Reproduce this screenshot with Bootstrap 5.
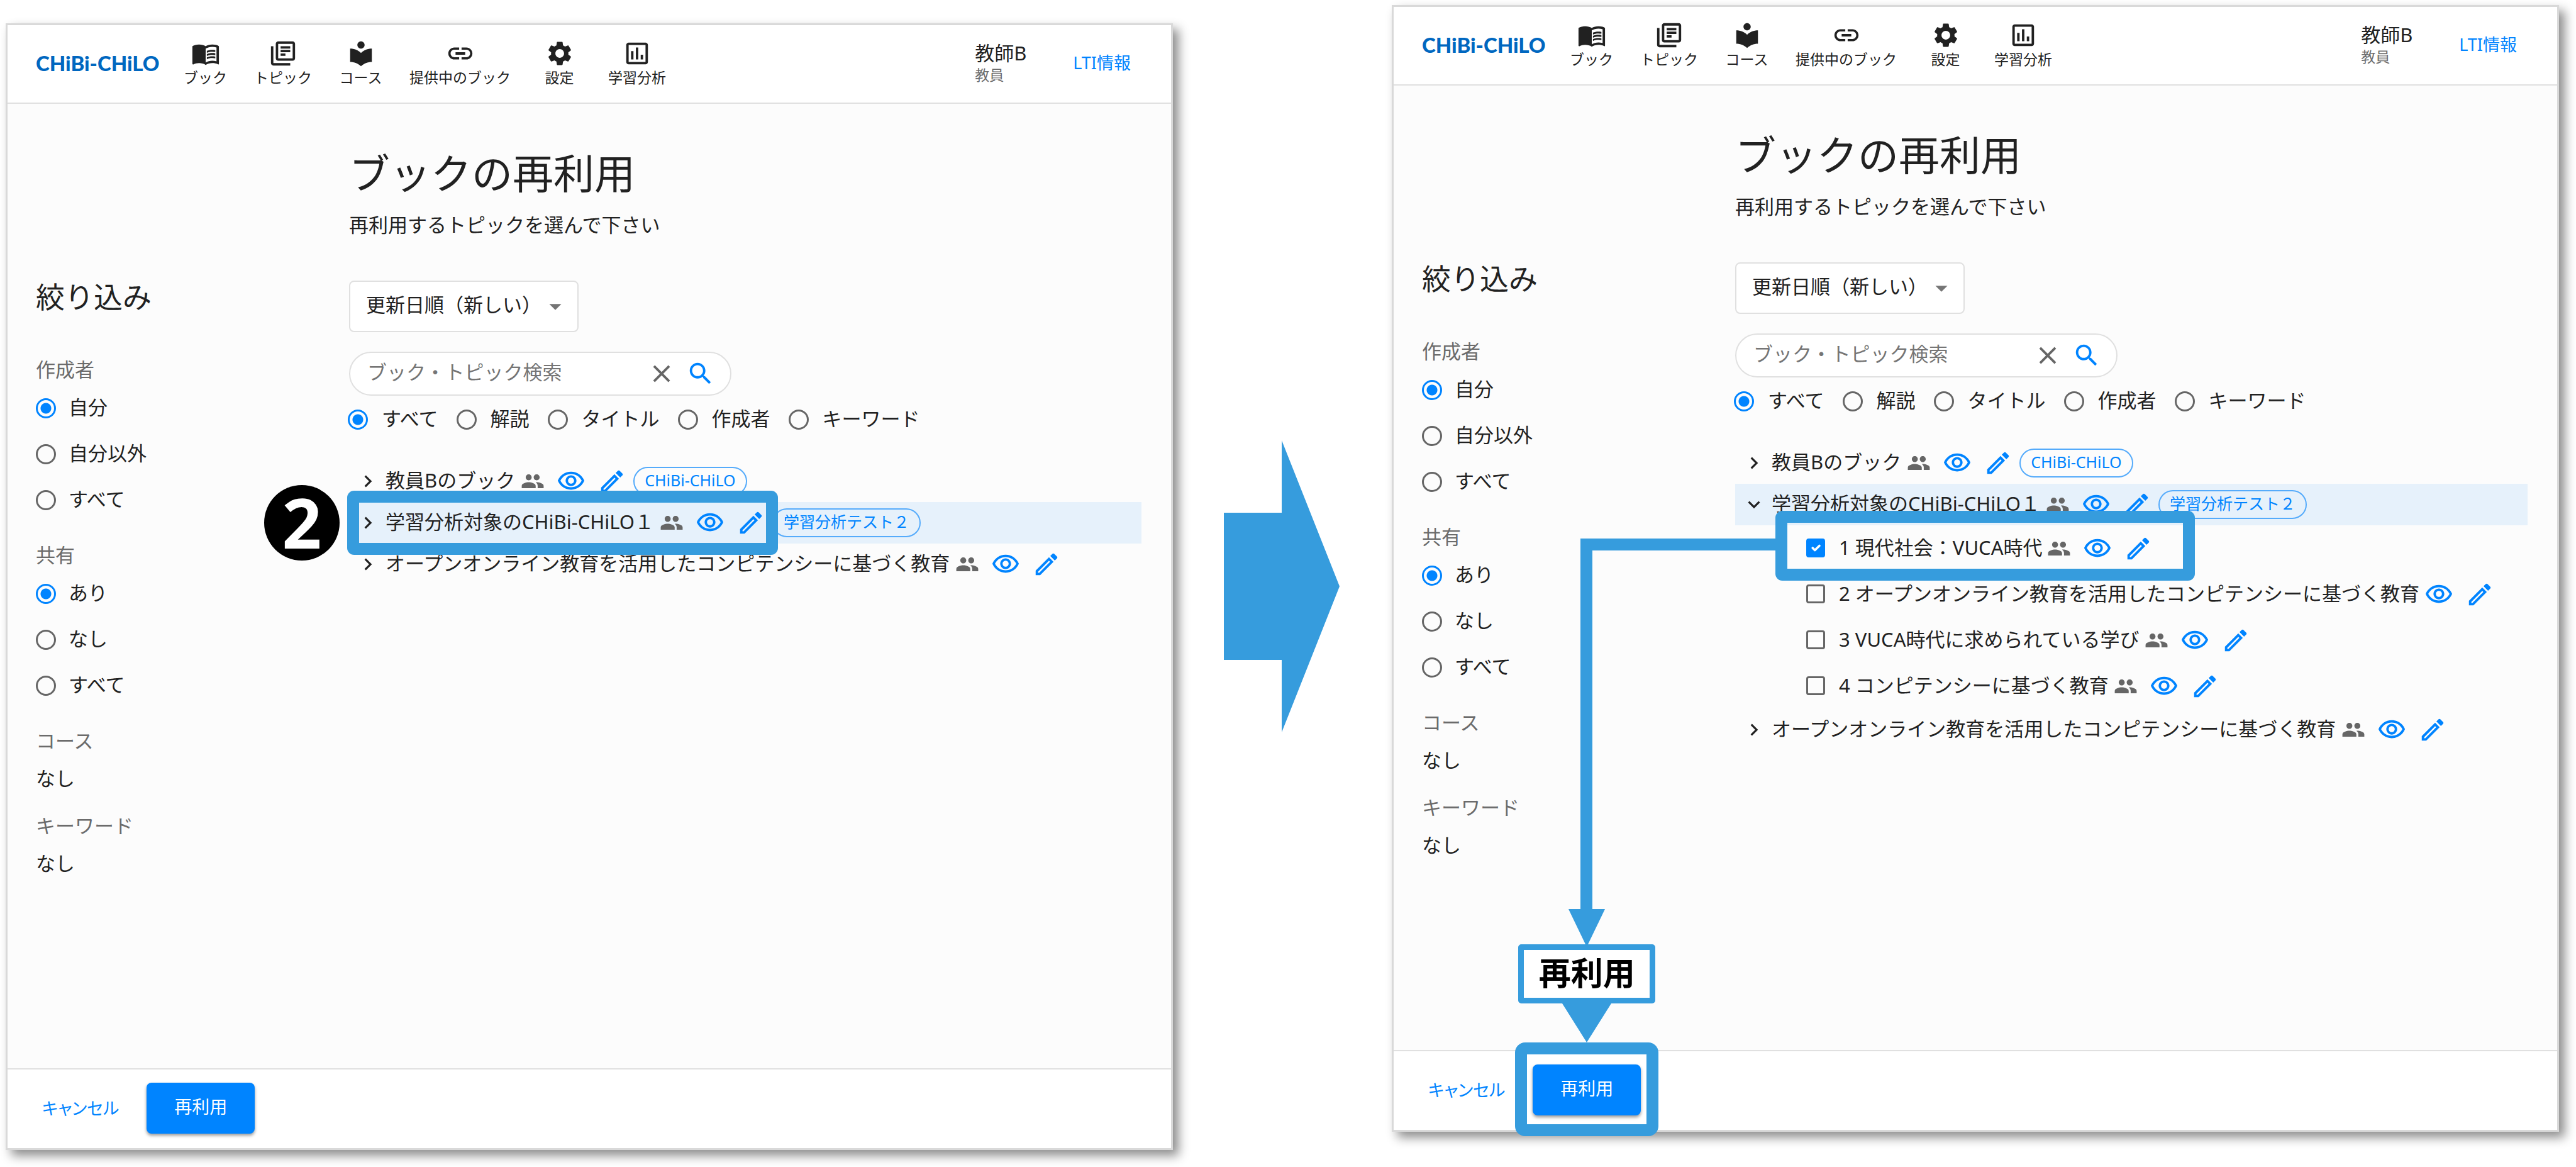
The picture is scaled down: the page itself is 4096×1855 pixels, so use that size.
<!DOCTYPE html>
<html lang="ja">
<head>
<meta charset="utf-8">
<meta name="viewport" content="width=device-width, initial-scale=1">
<title>ブックの再利用</title>
<link href="https://cdn.jsdelivr.net/npm/bootstrap@5.3.0/dist/css/bootstrap.min.css" rel="stylesheet">
<script src="https://cdn.jsdelivr.net/npm/bootstrap@5.3.0/dist/js/bootstrap.bundle.min.js"></script>
<style>
  :root { --accent: #0084ff; --callout: #369cdd; --ink: #212121; --muted: #6b6b6b; }
  body { font-family: "Noto Sans", "Noto Sans CJK JP", sans-serif; font-size: 31px; line-height: 46px; color: var(--ink); background: #fff; }
  svg { fill: currentColor; display: block; flex: none; }
  .i-lg { width: 46px; height: 46px; }
  .i-md { width: 38px; height: 38px; }
  .stage { padding: 0 27px 0 9px; }
  .slot { flex: 1 1 0; min-width: 0; }
  .slot-low { padding: 37px 0 27px; }
  .slot-high { padding: 8px 0 56px; }
  .between { width: 348px; padding-top: 700px; padding-left: 81px; }
  .screen { border: 3px solid #d9d9d9; background: #fcfcfc; box-shadow: 9px 9px 16px rgba(0,0,0,.45); }
  .topbar { height: 125px; background: #fff; border-bottom: 2px solid #e0e0e0; padding: 0 43px 4px 45px; }
  .brand { font: 900 33px/46px Lato, sans-serif; color: #0067c0; width: 213px; white-space: nowrap; }
  .menu-item { min-width: 113px; padding: 0 21px; font-size: 23px; line-height: 30px; color: var(--ink); text-decoration: none; }
  .who { width: 135px; line-height: 38px; }
  .who small { display: block; font-size: 23px; line-height: 32px; color: var(--muted); }
  .txt-link { color: var(--accent); font-size: 27px; text-decoration: none; border: 0; background: none; padding: 0 21px; font-feature-settings: "palt"; }
  .filters { width: 543px; padding: 276px 0 0 45px; }
  .filters h2 { font-size: 46px; line-height: 60px; margin: 0 0 62px; font-weight: 400; }
  .filters legend, .filters h3 { font-size: 31px; line-height: 48px; color: var(--muted); margin: 0; font-weight: 400; float: none; }
  .filters legend { margin-bottom: 2px; }
  .filters fieldset { margin-bottom: 26px; }
  .filters .pick, .filters p { height: 73px; line-height: 73px; margin: 0; }
  .filters p + h3 { margin-top: 14px; }
  .pick { display: flex; align-items: center; gap: 20px; padding-bottom: 4px; }
  .pick .form-check-input { width: 32px; height: 32px; margin: 3px 0 0; border: 3px solid #666; background-color: transparent; flex: none; box-shadow: none; }
  .pick .form-check-input[type=radio]:checked { border-color: var(--accent); background: radial-gradient(circle, var(--accent) 8px, transparent 9px); }
  .pick .form-check-input[type=checkbox] { width: 30px; height: 30px; border-radius: 4px; }
  .pick .form-check-input[type=checkbox]:checked { background-color: var(--accent); border-color: var(--accent); }
  .content { padding: 70px 47px 0 0; min-width: 0; }
  .content h1 { font-size: 65px; line-height: 80px; font-weight: 400; margin: 0 0 19px; }
  .content .intro { margin: 0 0 66px; }
  .sorter { width: 365px; height: 82px; margin-bottom: 31px; }
  .sorter select { height: 100%; padding: 0 0 6px 25px; font-size: 31px; line-height: 46px; color: var(--ink); background: #fff; border: 2px solid #e0e0e0; border-radius: 8px; }
  .sorter svg { position: absolute; right: 14px; top: 18px; color: #757575; pointer-events: none; }
  .finder { width: 608px; height: 70px; margin-bottom: 13px; padding: 0 24px 0 27px; background: #fff; border: 2px solid #e0e0e0; border-radius: 35px; }
  .finder input { border: 0; outline: 0; background: none; padding: 0 0 6px; color: var(--ink); min-width: 0; }
  .finder input::placeholder { color: #757575; opacity: 1; }
  .bare { border: 0; background: none; padding: 0; color: var(--accent); }
  .grayed { color: #666; }
  .scope { gap: 29px; margin: 0 0 40px -2px; }
  .scope .pick { gap: 22px; }
  .book { height: 66px; padding-left: 11px; }
  .book.on { background: #e6f1fb; }
  .ttl { margin: 0 9px; padding-bottom: 4px; white-space: nowrap; }
  .acts { gap: 19px; }
  .chip { margin-left: 11px; height: 46px; border: 2px solid #55abfb; border-radius: 23px; color: var(--accent); font-size: 25px; line-height: 38px; padding: 0 16px; white-space: nowrap; }
  .topic { height: 73px; padding-left: 113px; }
  .topic .pick { gap: 22px; }
  .actionbar { height: 127px; background: #fff; border-top: 2px solid #e0e0e0; padding: 0 0 2px 34px; gap: 23px; }
  .go { width: 172px; height: 81px; background: var(--accent); color: #fff; border: 0; border-radius: 8px; font-size: 28px; padding: 0 0 6px; box-shadow: 0 3px 5px rgba(0,0,0,.4); }
  .ring { position: absolute; border: 19px solid var(--callout); border-radius: 11px; pointer-events: none; z-index: 3; }
  .ring-book { inset: -26px -20px -26px -14px; }
  .ring-topic { inset: -35px -67px -26px -49px; }
  .ring-go { inset: -35px -28px -33px; border-radius: 16px; }
  .step { position: absolute; right: 100%; top: 50%; margin: -60px 26px 0 0; width: 120px; height: 120px; border-radius: 50%; background: #000; color: #fff; font-size: 110px; font-weight: 700; line-height: 116px; text-align: center; z-index: 3; }
  .route { position: absolute; left: 297px; top: 845px; width: 312px; height: 594px; border: solid var(--callout); border-width: 19px 0 0 19px; z-index: 2; pointer-events: none; }
  .pointer { position: absolute; bottom: 100%; left: 50%; width: 218px; margin: 0 0 35px -109px; color: var(--callout); z-index: 2; }
  .pointer b { border: 9px solid var(--callout); border-radius: 5px; background: #fff; color: #000; font-size: 51px; line-height: 72px; height: 94px; width: 100%; text-align: center; }
</style>
</head>
<body>
<svg width="0" height="0" class="position-absolute" aria-hidden="true">
  <symbol id="book" viewBox="0 0 24 24"><path d="M21 5c-1.11-.35-2.33-.5-3.5-.5-1.95 0-4.05.4-5.5 1.5-1.45-1.1-3.55-1.5-5.5-1.5S2.450 4.900 1 6v14.650c0 .25.25.5.5.5.1 0 .15-.05.25-.05C3.100 20.450 5.050 20 6.500 20c1.950 0 4.050.4 5.500 1.500 1.350-.85 3.800-1.500 5.500-1.500 1.650 0 3.350.3 4.750 1.050.1.05.15.05.25.05.25 0 .5-.25.5-.5V6c-.6-.45-1.250-.75-2-1zm0 13.500c-1.100-.35-2.300-.5-3.500-.5-1.700 0-4.150.65-5.500 1.500V8c1.350-.85 3.800-1.500 5.500-1.500 1.200 0 2.400.15 3.500.5v11.500z"/><path d="M17.500 10.500c.88 0 1.730.09 2.500.26V9.240c-.79-.15-1.640-.24-2.500-.24-1.700 0-3.240.29-4.500.83v1.660c1.130-.64 2.700-.99 4.500-.99zM13 12.490v1.660c1.130-.64 2.700-.99 4.500-.99.88 0 1.730.09 2.500.26V11.900c-.79-.15-1.640-.24-2.500-.24-1.700 0-3.240.3-4.500.83zM17.500 14.330c-1.700 0-3.240.29-4.500.83v1.660c1.130-.64 2.700-.99 4.500-.99.88 0 1.730.09 2.500.26v-1.520c-.79-.16-1.640-.24-2.500-.24z"/></symbol>
  <symbol id="topics" viewBox="0 0 24 24"><path d="M4 6H2v14c0 1.100.9 2 2 2h14v-2H4V6zm16-4H8c-1.100 0-2 .9-2 2v12c0 1.100.9 2 2 2h12c1.100 0 2-.9 2-2V4c0-1.100-.9-2-2-2zm0 14H8V4h12v12zM10 9h8v2h-8zm0 3h4v2h-4zm0-6h8v2h-8z"/></symbol>
  <symbol id="course" viewBox="0 0 24 24"><path d="M12 11.550C9.640 9.350 6.480 8 3 8v11c3.480 0 6.640 1.350 9 3.550 2.360-2.190 5.520-3.550 9-3.550V8c-3.480 0-6.640 1.350-9 3.550zM12 8c1.660 0 3-1.340 3-3s-1.340-3-3-3-3 1.340-3 3 1.340 3 3 3z"/></symbol>
  <symbol id="link" viewBox="0 0 24 24"><path d="M3.900 12c0-1.710 1.390-3.100 3.100-3.100h4V7H7c-2.760 0-5 2.240-5 5s2.240 5 5 5h4v-1.900H7c-1.710 0-3.100-1.390-3.100-3.100zM8 13h8v-2H8v2zm9-6h-4v1.900h4c1.710 0 3.100 1.390 3.100 3.100s-1.390 3.100-3.100 3.100h-4V17h4c2.760 0 5-2.240 5-5s-2.240-5-5-5z"/></symbol>
  <symbol id="gear" viewBox="0 0 24 24"><path d="M19.140 12.940c.04-.3.06-.61.06-.94 0-.32-.02-.64-.07-.94l2.030-1.580c.18-.14.23-.41.12-.61l-1.920-3.320c-.12-.22-.37-.29-.59-.22l-2.390.96c-.5-.38-1.030-.7-1.620-.94l-.36-2.540c-.04-.24-.24-.41-.48-.41h-3.840c-.24 0-.43.17-.47.41l-.36 2.540c-.59.24-1.130.57-1.620.94l-2.390-.96c-.22-.08-.47 0-.59.22L2.740 8.870c-.12.21-.08.47.12.61l2.030 1.580c-.05.3-.09.63-.09.94s.02.64.07.94l-2.030 1.580c-.18.14-.23.41-.12.61l1.920 3.320c.12.22.37.29.59.22l2.390-.96c.5.38 1.030.7 1.620.94l.36 2.540c.05.24.24.41.48.41h3.840c.24 0 .44-.17.47-.41l.36-2.540c.59-.24 1.130-.56 1.620-.94l2.390.96c.22.08.47 0 .59-.22l1.920-3.320c.12-.22.07-.47-.12-.61l-2.010-1.580zM12 15.600c-1.980 0-3.600-1.620-3.600-3.600s1.620-3.600 3.600-3.600 3.600 1.620 3.600 3.600-1.620 3.600-3.600 3.600z"/></symbol>
  <symbol id="chart" viewBox="0 0 24 24"><path d="M19 3H5c-1.100 0-2 .9-2 2v14c0 1.100.9 2 2 2h14c1.100 0 2-.9 2-2V5c0-1.100-.9-2-2-2zm0 16H5V5h14v14zM7 10h2v7H7zm4-3h2v10h-2zm4 6h2v4h-2z"/></symbol>
  <symbol id="people" viewBox="0 0 24 24"><path d="M16 11c1.660 0 2.990-1.340 2.990-3S17.660 5 16 5c-1.660 0-3 1.340-3 3s1.340 3 3 3zm-8 0c1.660 0 2.990-1.340 2.990-3S9.660 5 8 5C6.340 5 5 6.340 5 8s1.340 3 3 3zm0 2c-2.330 0-7 1.170-7 3.500V19h14v-2.500c0-2.330-4.670-3.500-7-3.500zm8 0c-.29 0-.62.02-.97.05 1.160.84 1.970 1.970 1.970 3.450V19h6v-2.500c0-2.330-4.670-3.500-7-3.500z"/></symbol>
  <symbol id="eye" viewBox="0 0 24 24"><path d="M12 6c3.790 0 7.170 2.130 8.820 5.500C19.170 14.870 15.790 17 12 17s-7.170-2.130-8.820-5.500C4.830 8.130 8.210 6 12 6m0-2C7 4 2.730 7.110 1 11.500 2.730 15.890 7 19 12 19s9.270-3.110 11-7.500C21.270 7.110 17 4 12 4zm0 5c1.380 0 2.500 1.120 2.500 2.500S13.380 14 12 14s-2.500-1.120-2.500-2.500S10.620 9 12 9m0-2c-2.480 0-4.500 2.020-4.500 4.500S9.520 16 12 16s4.500-2.020 4.500-4.500S14.480 7 12 7z"/></symbol>
  <symbol id="pen" viewBox="0 0 24 24"><path d="M14.060 9.020l.92.92L5.920 19H5v-.92l9.060-9.060M17.660 3c-.25 0-.51.1-.7.29l-1.830 1.830 3.750 3.750 1.830-1.830c.39-.39.39-1.020 0-1.410l-2.340-2.340c-.2-.2-.45-.29-.71-.29zm-3.600 3.190L3 17.250V21h3.750L17.810 9.940l-3.750-3.750z"/></symbol>
  <symbol id="right" viewBox="0 0 24 24"><path d="M10 6L8.590 7.410 13.170 12l-4.580 4.590L10 18l6-6z"/></symbol>
  <symbol id="down" viewBox="0 0 24 24"><path d="M16.590 8.590L12 13.170 7.410 8.590 6 10l6 6 6-6z"/></symbol>
  <symbol id="caret" viewBox="0 0 24 24"><path d="M7 10l5 5 5-5z"/></symbol>
  <symbol id="close" viewBox="0 0 24 24"><path d="M19 6.410L17.590 5 12 10.590 6.410 5 5 6.410 10.590 12 5 17.590 6.410 19 12 13.410 17.590 19 19 17.590 13.410 12z"/></symbol>
  <symbol id="lens" viewBox="0 0 24 24"><path d="M15.500 14h-.79l-.28-.27C15.410 12.590 16 11.110 16 9.500 16 5.910 13.090 3 9.500 3S3 5.910 3 9.500 5.910 16 9.500 16c1.610 0 3.090-.59 4.230-1.570l.27.28v.79l5 4.990L20.490 19l-4.990-5zm-6 0C7.010 14 5 11.990 5 9.500S7.010 5 9.500 5 14 7.010 14 9.500 11.990 14 9.500 14z"/></symbol>
</svg>

<div class="stage d-flex min-vh-100">

  <!-- Screen before the book is opened -->
  <div class="slot slot-low d-flex">
    <section class="screen position-relative flex-fill d-flex flex-column">
      <header class="topbar d-flex align-items-center">
        <div class="brand">CHiBi-CHiLO</div>
        <nav class="d-flex me-auto">
          <a href="#" class="menu-item d-flex flex-column align-items-center"><svg class="i-lg"><use href="#book"/></svg>ブック</a>
          <a href="#" class="menu-item d-flex flex-column align-items-center"><svg class="i-lg"><use href="#topics"/></svg>トピック</a>
          <a href="#" class="menu-item d-flex flex-column align-items-center"><svg class="i-lg"><use href="#course"/></svg>コース</a>
          <a href="#" class="menu-item d-flex flex-column align-items-center"><svg class="i-lg"><use href="#link"/></svg>提供中のブック</a>
          <a href="#" class="menu-item d-flex flex-column align-items-center"><svg class="i-lg"><use href="#gear"/></svg>設定</a>
          <a href="#" class="menu-item d-flex flex-column align-items-center"><svg class="i-lg"><use href="#chart"/></svg>学習分析</a>
        </nav>
        <div class="who">教師B<small>教員</small></div>
        <button type="button" class="txt-link">LTI情報</button>
      </header>
      <div class="d-flex flex-grow-1">
        <aside class="filters flex-shrink-0">
          <h2>絞り込み</h2>
          <fieldset>
            <legend>作成者</legend>
            <label class="pick"><input class="form-check-input" type="radio" name="a-author" checked>自分</label>
            <label class="pick"><input class="form-check-input" type="radio" name="a-author">自分以外</label>
            <label class="pick"><input class="form-check-input" type="radio" name="a-author">すべて</label>
          </fieldset>
          <fieldset>
            <legend>共有</legend>
            <label class="pick"><input class="form-check-input" type="radio" name="a-share" checked>あり</label>
            <label class="pick"><input class="form-check-input" type="radio" name="a-share">なし</label>
            <label class="pick"><input class="form-check-input" type="radio" name="a-share">すべて</label>
          </fieldset>
          <h3>コース</h3>
          <p>なし</p>
          <h3>キーワード</h3>
          <p>なし</p>
        </aside>
        <main class="content flex-grow-1">
          <h1>ブックの再利用</h1>
          <p class="intro">再利用するトピックを選んで下さい</p>
          <div class="sorter position-relative">
            <select class="form-select" aria-label="並び順"><option>更新日順（新しい）</option></select>
            <svg class="i-lg"><use href="#caret"/></svg>
          </div>
          <div class="finder d-flex align-items-center">
            <input class="flex-grow-1" type="text" placeholder="ブック・トピック検索" aria-label="ブック・トピック検索">
            <button type="button" class="bare grayed me-3" aria-label="消去"><svg class="i-lg"><use href="#close"/></svg></button>
            <button type="button" class="bare" aria-label="検索"><svg class="i-lg"><use href="#lens"/></svg></button>
          </div>
          <div class="scope d-flex" role="radiogroup" aria-label="検索対象">
            <label class="pick"><input class="form-check-input" type="radio" name="a-scope" checked>すべて</label>
            <label class="pick"><input class="form-check-input" type="radio" name="a-scope">解説</label>
            <label class="pick"><input class="form-check-input" type="radio" name="a-scope">タイトル</label>
            <label class="pick"><input class="form-check-input" type="radio" name="a-scope">作成者</label>
            <label class="pick"><input class="form-check-input" type="radio" name="a-scope">キーワード</label>
          </div>
          <div class="book d-flex align-items-center">
            <svg class="i-md"><use href="#right"/></svg><span class="ttl">教員Bのブック</span>
            <span class="acts d-flex align-items-center"><svg class="i-md grayed"><use href="#people"/></svg>
            <button type="button" class="bare" aria-label="表示"><svg class="i-lg"><use href="#eye"/></svg></button>
            <button type="button" class="bare" aria-label="編集"><svg class="i-lg"><use href="#pen"/></svg></button></span>
            <span class="chip">CHiBi-CHiLO</span>
          </div>
          <div class="book on d-flex align-items-center">
            <div class="position-relative d-flex align-items-center">
              <svg class="i-md"><use href="#right"/></svg><span class="ttl">学習分析対象のCHiBi-CHiLO１</span>
              <span class="acts d-flex align-items-center"><svg class="i-md grayed"><use href="#people"/></svg>
              <button type="button" class="bare" aria-label="表示"><svg class="i-lg"><use href="#eye"/></svg></button>
              <button type="button" class="bare" aria-label="編集"><svg class="i-lg"><use href="#pen"/></svg></button></span>
              <div class="ring ring-book"></div>
              <div class="step">2</div>
            </div>
            <span class="chip">学習分析テスト２</span>
          </div>
          <div class="book d-flex align-items-center">
            <svg class="i-md"><use href="#right"/></svg><span class="ttl">オープンオンライン教育を活用したコンピテンシーに基づく教育</span>
            <span class="acts d-flex align-items-center"><svg class="i-md grayed"><use href="#people"/></svg>
            <button type="button" class="bare" aria-label="表示"><svg class="i-lg"><use href="#eye"/></svg></button>
            <button type="button" class="bare" aria-label="編集"><svg class="i-lg"><use href="#pen"/></svg></button></span>
          </div>
        </main>
      </div>
      <footer class="actionbar d-flex align-items-center">
        <button type="button" class="txt-link">キャンセル</button>
        <button type="button" class="go">再利用</button>
      </footer>
    </section>
  </div>

  <div class="between flex-shrink-0">
    <svg width="184" height="464" viewBox="0 0 184 464" style="color: var(--callout)"><path d="M0 115H92V0L184 232 92 464V349H0z"/></svg>
  </div>

  <!-- Screen with the book opened and a topic ticked -->
  <div class="slot slot-high d-flex">
    <section class="screen position-relative flex-fill d-flex flex-column">
      <header class="topbar d-flex align-items-center">
        <div class="brand">CHiBi-CHiLO</div>
        <nav class="d-flex me-auto">
          <a href="#" class="menu-item d-flex flex-column align-items-center"><svg class="i-lg"><use href="#book"/></svg>ブック</a>
          <a href="#" class="menu-item d-flex flex-column align-items-center"><svg class="i-lg"><use href="#topics"/></svg>トピック</a>
          <a href="#" class="menu-item d-flex flex-column align-items-center"><svg class="i-lg"><use href="#course"/></svg>コース</a>
          <a href="#" class="menu-item d-flex flex-column align-items-center"><svg class="i-lg"><use href="#link"/></svg>提供中のブック</a>
          <a href="#" class="menu-item d-flex flex-column align-items-center"><svg class="i-lg"><use href="#gear"/></svg>設定</a>
          <a href="#" class="menu-item d-flex flex-column align-items-center"><svg class="i-lg"><use href="#chart"/></svg>学習分析</a>
        </nav>
        <div class="who">教師B<small>教員</small></div>
        <button type="button" class="txt-link">LTI情報</button>
      </header>
      <div class="d-flex flex-grow-1">
        <aside class="filters flex-shrink-0">
          <h2>絞り込み</h2>
          <fieldset>
            <legend>作成者</legend>
            <label class="pick"><input class="form-check-input" type="radio" name="b-author" checked>自分</label>
            <label class="pick"><input class="form-check-input" type="radio" name="b-author">自分以外</label>
            <label class="pick"><input class="form-check-input" type="radio" name="b-author">すべて</label>
          </fieldset>
          <fieldset>
            <legend>共有</legend>
            <label class="pick"><input class="form-check-input" type="radio" name="b-share" checked>あり</label>
            <label class="pick"><input class="form-check-input" type="radio" name="b-share">なし</label>
            <label class="pick"><input class="form-check-input" type="radio" name="b-share">すべて</label>
          </fieldset>
          <h3>コース</h3>
          <p>なし</p>
          <h3>キーワード</h3>
          <p>なし</p>
        </aside>
        <main class="content flex-grow-1">
          <h1>ブックの再利用</h1>
          <p class="intro">再利用するトピックを選んで下さい</p>
          <div class="sorter position-relative">
            <select class="form-select" aria-label="並び順"><option>更新日順（新しい）</option></select>
            <svg class="i-lg"><use href="#caret"/></svg>
          </div>
          <div class="finder d-flex align-items-center">
            <input class="flex-grow-1" type="text" placeholder="ブック・トピック検索" aria-label="ブック・トピック検索">
            <button type="button" class="bare grayed me-3" aria-label="消去"><svg class="i-lg"><use href="#close"/></svg></button>
            <button type="button" class="bare" aria-label="検索"><svg class="i-lg"><use href="#lens"/></svg></button>
          </div>
          <div class="scope d-flex" role="radiogroup" aria-label="検索対象">
            <label class="pick"><input class="form-check-input" type="radio" name="b-scope" checked>すべて</label>
            <label class="pick"><input class="form-check-input" type="radio" name="b-scope">解説</label>
            <label class="pick"><input class="form-check-input" type="radio" name="b-scope">タイトル</label>
            <label class="pick"><input class="form-check-input" type="radio" name="b-scope">作成者</label>
            <label class="pick"><input class="form-check-input" type="radio" name="b-scope">キーワード</label>
          </div>
          <div class="book d-flex align-items-center">
            <svg class="i-md"><use href="#right"/></svg><span class="ttl">教員Bのブック</span>
            <span class="acts d-flex align-items-center"><svg class="i-md grayed"><use href="#people"/></svg>
            <button type="button" class="bare" aria-label="表示"><svg class="i-lg"><use href="#eye"/></svg></button>
            <button type="button" class="bare" aria-label="編集"><svg class="i-lg"><use href="#pen"/></svg></button></span>
            <span class="chip">CHiBi-CHiLO</span>
          </div>
          <div class="book on d-flex align-items-center">
            <svg class="i-md"><use href="#down"/></svg><span class="ttl">学習分析対象のCHiBi-CHiLO１</span>
            <span class="acts d-flex align-items-center"><svg class="i-md grayed"><use href="#people"/></svg>
            <button type="button" class="bare" aria-label="表示"><svg class="i-lg"><use href="#eye"/></svg></button>
            <button type="button" class="bare" aria-label="編集"><svg class="i-lg"><use href="#pen"/></svg></button></span>
            <span class="chip">学習分析テスト２</span>
          </div>
          <div class="topic d-flex align-items-center">
            <div class="position-relative d-flex align-items-center">
              <label class="pick"><input class="form-check-input" type="checkbox" checked><span class="me-2">1 現代社会：VUCA時代</span></label>
              <span class="acts d-flex align-items-center"><svg class="i-md grayed"><use href="#people"/></svg>
              <button type="button" class="bare" aria-label="表示"><svg class="i-lg"><use href="#eye"/></svg></button>
              <button type="button" class="bare" aria-label="編集"><svg class="i-lg"><use href="#pen"/></svg></button></span>
              <div class="ring ring-topic"></div>
            </div>
          </div>
          <div class="topic d-flex align-items-center">
            <label class="pick"><input class="form-check-input" type="checkbox"><span class="me-2">2 オープンオンライン教育を活用したコンピテンシーに基づく教育</span></label>
            <span class="acts d-flex align-items-center">
            <button type="button" class="bare" aria-label="表示"><svg class="i-lg"><use href="#eye"/></svg></button>
            <button type="button" class="bare" aria-label="編集"><svg class="i-lg"><use href="#pen"/></svg></button></span>
          </div>
          <div class="topic d-flex align-items-center">
            <label class="pick"><input class="form-check-input" type="checkbox"><span class="me-2">3 VUCA時代に求められている学び</span></label>
            <span class="acts d-flex align-items-center"><svg class="i-md grayed"><use href="#people"/></svg>
            <button type="button" class="bare" aria-label="表示"><svg class="i-lg"><use href="#eye"/></svg></button>
            <button type="button" class="bare" aria-label="編集"><svg class="i-lg"><use href="#pen"/></svg></button></span>
          </div>
          <div class="topic d-flex align-items-center">
            <label class="pick"><input class="form-check-input" type="checkbox"><span class="me-2">4 コンピテンシーに基づく教育</span></label>
            <span class="acts d-flex align-items-center"><svg class="i-md grayed"><use href="#people"/></svg>
            <button type="button" class="bare" aria-label="表示"><svg class="i-lg"><use href="#eye"/></svg></button>
            <button type="button" class="bare" aria-label="編集"><svg class="i-lg"><use href="#pen"/></svg></button></span>
          </div>
          <div class="book d-flex align-items-center">
            <svg class="i-md"><use href="#right"/></svg><span class="ttl">オープンオンライン教育を活用したコンピテンシーに基づく教育</span>
            <span class="acts d-flex align-items-center"><svg class="i-md grayed"><use href="#people"/></svg>
            <button type="button" class="bare" aria-label="表示"><svg class="i-lg"><use href="#eye"/></svg></button>
            <button type="button" class="bare" aria-label="編集"><svg class="i-lg"><use href="#pen"/></svg></button></span>
          </div>
        </main>
      </div>
      <footer class="actionbar d-flex align-items-center">
        <button type="button" class="txt-link">キャンセル</button>
        <div class="position-relative">
          <button type="button" class="go d-block">再利用</button>
          <div class="ring ring-go"></div>
          <div class="pointer d-flex flex-column align-items-center">
            <svg width="58" height="56" viewBox="0 0 58 56"><path d="M0 0H58L31 56H27z"/></svg>
            <b>再利用</b>
            <svg width="78" height="62" viewBox="0 0 78 62"><path d="M0 0H78L39 62z"/></svg>
          </div>
        </div>
      </footer>
      <div class="route"></div>
    </section>
  </div>
</div>
</body>
</html>
